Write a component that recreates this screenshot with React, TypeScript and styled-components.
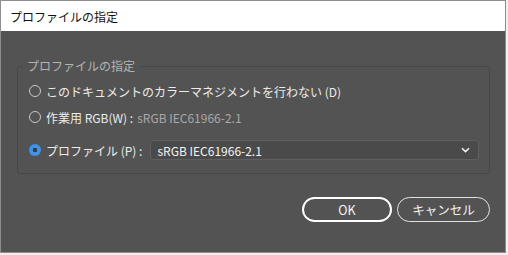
import React from 'react'
import styled, { createGlobalStyle } from 'styled-components'

const GlobalStyle = createGlobalStyle`
  html, body {
    margin: 0;
    padding: 0;
    background: #f0f0f0;
  }
  body {
    font-family: "Noto Sans CJK JP", "Noto Sans", sans-serif;
    font-size: 12px;
  }
`

const Window = styled.div`
  box-sizing: border-box;
  width: 506px;
  height: 253px;
  border: 1px solid #8e8e8e;
  display: flex;
  flex-direction: column;
  background: #535353;
`

const TitleBar = styled.div`
  height: 30px;
  flex: none;
  background: #fff;
  color: #111;
  display: flex;
  align-items: center;
  padding-left: 9px;
  font-size: 12px;
`

const Body = styled.div`
  flex: 1;
  padding: 27px 15px 0 16px;
  display: flex;
  flex-direction: column;
`

const Group = styled.fieldset`
  margin: 0;
  width: 473px;
  box-sizing: border-box;
  border: 1px solid #474747;
  border-radius: 3px;
  padding: 4px 10px 13px 11px;
  display: flex;
  flex-direction: column;
`

const Legend = styled.legend`
  margin-left: -6px;
  padding: 0 4px;
  height: 16px;
  line-height: 16px;
  color: #b4b4b4;
  font-size: 12px;
`

const Row = styled.label<{ $tall?: boolean }>`
  display: flex;
  align-items: center;
  height: ${(p) => (p.$tall ? '20px' : '26px')};
  margin-top: ${(p) => (p.$tall ? '10px' : '0')};
  color: #ececec;
  font-size: 12px;
  white-space: nowrap;
`

const Radio = styled.span<{ $checked?: boolean }>`
  box-sizing: border-box;
  width: 12px;
  height: 12px;
  border-radius: 50%;
  flex: none;
  margin-right: 5px;
  border: ${(p) => (p.$checked ? 'none' : '1.5px solid #c9c9c9')};
  background: ${(p) => (p.$checked ? '#3f92ec' : 'transparent')};
  display: flex;
  align-items: center;
  justify-content: center;

  &::after {
    content: '';
    display: ${(p) => (p.$checked ? 'block' : 'none')};
    width: 4px;
    height: 4px;
    border-radius: 1px;
    background: #3a3a3a;
  }
`

const Value = styled.span`
  color: #a9a9a9;
  margin-left: 4px;
`

const Select = styled.div`
  box-sizing: border-box;
  margin-left: 8px;
  width: 329px;
  height: 20px;
  background: #4a4a4a;
  border: 1px solid #5f5f5f;
  border-radius: 3px;
  display: flex;
  align-items: center;
  justify-content: space-between;
  padding: 0 8px 0 6px;
  color: #f4f4f4;
`

const Buttons = styled.div`
  display: flex;
  justify-content: flex-end;
  gap: 5px;
  margin-top: 23px;
`

const Button = styled.button<{ $primary?: boolean }>`
  box-sizing: border-box;
  width: ${(p) => (p.$primary ? '90px' : '93px')};
  height: 25px;
  border-radius: 13px;
  background: transparent;
  border: ${(p) => (p.$primary ? '2px solid #ffffff' : '1.5px solid #e2e2e2')};
  color: #f4f4f4;
  font-family: inherit;
  font-size: 12.5px;
  padding: 0;
`

const Chevron = () => (
  <svg width="9" height="6" viewBox="0 0 9 6">
    <path d="M1 1.2 L4.5 4.6 L8 1.2" fill="none" stroke="#f0f0f0" strokeWidth="1.6" />
  </svg>
)

export default function App() {
  return (
    <>
      <GlobalStyle />
      <Window>
        <TitleBar>プロファイルの指定</TitleBar>
        <Body>
          <Group>
            <Legend>プロファイルの指定</Legend>
            <Row>
              <Radio />
              このドキュメントのカラーマネジメントを行わない (D)
            </Row>
            <Row>
              <Radio />
              作業用 RGB(W) :<Value>sRGB IEC61966-2.1</Value>
            </Row>
            <Row $tall>
              <Radio $checked />
              プロファイル (P) :
              <Select>
                <span>sRGB IEC61966-2.1</span>
                <Chevron />
              </Select>
            </Row>
          </Group>
          <Buttons>
            <Button $primary>OK</Button>
            <Button>キャンセル</Button>
          </Buttons>
        </Body>
      </Window>
    </>
  )
}
